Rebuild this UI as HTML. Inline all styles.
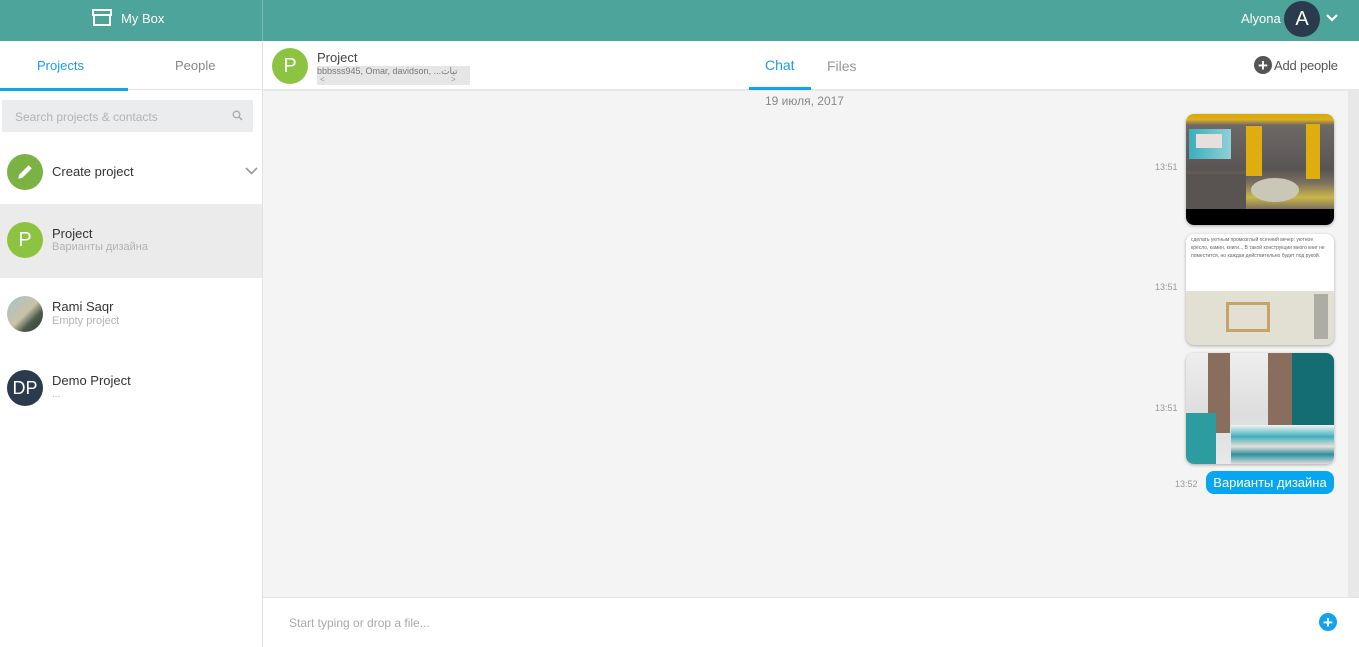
<!DOCTYPE html>
<html><head><meta charset="utf-8"><style>
*{box-sizing:border-box;margin:0;padding:0}
body{width:1359px;height:647px;overflow:hidden;font-family:"Liberation Sans","Noto Sans CJK SC",sans-serif;background:#fff;position:relative;font-size:13px}
.abs{position:absolute}
.top{left:0;top:0;width:1359px;height:41px;background:#4da49a}
.av{border-radius:50%;color:#fff;display:flex;align-items:center;justify-content:center}
.time{font-size:9px;color:#999}
.img{border-radius:8px;overflow:hidden;box-shadow:0 1px 3px rgba(0,0,0,.3)}
</style></head><body>
<div class="abs top"></div>
<div class="abs" style="left:262px;top:0;width:1px;height:41px;background:#7cbdb5"></div>
<svg class="abs" style="left:92px;top:9px" width="20" height="17" viewBox="0 0 20 17"><rect x="1" y="1" width="18" height="5" fill="none" stroke="#fff" stroke-width="2"/><rect x="2" y="6" width="16" height="10" fill="none" stroke="#fff" stroke-width="2"/></svg>
<div class="abs" style="left:121px;top:11px;color:#fff;font-size:13px">My Box</div>
<div class="abs" style="left:1241px;top:11px;color:#fff;font-size:13px">Alyona</div>
<div class="abs av" style="left:1284px;top:1px;width:36px;height:36px;background:#2b3a4c;font-size:20px">A</div>
<svg class="abs" style="left:1325px;top:13px" width="14" height="10"><path d="M2 2l5 5 5-5" fill="none" stroke="#fff" stroke-width="2.2"/></svg>

<div class="abs" style="left:0;top:41px;width:263px;height:606px;background:#fff;border-right:1px solid #e3e3e3"></div>
<div class="abs" style="left:37px;top:58px;color:#1a9de8;font-size:13px">Projects</div>
<div class="abs" style="left:175px;top:58px;color:#888;font-size:13px">People</div>
<div class="abs" style="left:0;top:88px;width:128px;height:3px;background:#13a3ec"></div>
<div class="abs" style="left:128px;top:89px;width:134px;height:1px;background:#e0e6e6"></div>
<div class="abs" style="left:2px;top:100px;width:251px;height:32px;background:#ebeced"></div>
<div class="abs" style="left:15px;top:110px;color:#b3b3b3;font-size:12px">Search projects &amp; contacts</div>
<svg class="abs" style="left:232px;top:110px" width="11" height="11"><circle cx="4.5" cy="4.5" r="3.3" fill="none" stroke="#aaa" stroke-width="1.3"/><path d="M7 7l3 3" stroke="#aaa" stroke-width="1.5"/></svg>
<div class="abs av" style="left:7px;top:154px;width:36px;height:36px;background:#7bb243"><svg width="18" height="18" viewBox="0 0 16 16"><path d="M2 14l.8-3.6 8.4-8.4 2.8 2.8-8.4 8.4z" fill="#fff"/></svg></div>
<div class="abs" style="left:52px;top:164px;color:#333;font-size:13px">Create project</div>
<svg class="abs" style="left:245px;top:167px" width="13" height="9"><path d="M1 1l5.5 5.5L12 1" fill="none" stroke="#999" stroke-width="1.6"/></svg>
<div class="abs" style="left:0;top:204px;width:262px;height:74px;background:#ebebeb"></div>
<div class="abs av" style="left:7px;top:222px;width:36px;height:36px;background:#8cc340;font-size:20px">P</div>
<div class="abs" style="left:52px;top:226px;color:#333;font-size:13px">Project</div>
<div class="abs" style="left:52px;top:241px;color:#b3b3b3;font-size:11px">Варианты дизайна</div>
<div class="abs av" style="left:7px;top:296px;width:36px;height:36px;background:linear-gradient(135deg,#a9c0c8 0%,#c9c3a8 50%,#4d5a4a 70%,#2f3e3a 100%)"></div>
<div class="abs" style="left:52px;top:299px;color:#333;font-size:13px">Rami Saqr</div>
<div class="abs" style="left:52px;top:315px;color:#b3b3b3;font-size:11px">Empty project</div>
<div class="abs av" style="left:7px;top:370px;width:36px;height:36px;background:#2b3a4c;font-size:18px">DP</div>
<div class="abs" style="left:52px;top:373px;color:#333;font-size:13px">Demo Project</div>
<div class="abs" style="left:52px;top:389px;color:#b3b3b3;font-size:10px">...</div>

<div class="abs" style="left:263px;top:89px;width:1096px;height:2px;background:#e3e8e8"></div>
<div class="abs av" style="left:272px;top:48px;width:36px;height:36px;background:#8cc340;font-size:20px">P</div>
<div class="abs" style="left:317px;top:50px;color:#444;font-size:13px">Project</div>
<div class="abs" style="left:317px;top:66px;width:153px;height:19px;background:#e6e6e6"></div>
<div class="abs" style="left:317px;top:66px;color:#777;font-size:9px">bbbsss945, Omar, davidson, ...تيات</div>
<div class="abs" style="left:320px;top:75px;color:#999;font-size:8px">&lt;</div>
<div class="abs" style="left:451px;top:75px;color:#999;font-size:8px">&gt;</div>
<div class="abs" style="left:765px;top:57px;color:#1a9de8;font-size:14px">Chat</div>
<div class="abs" style="left:749px;top:87px;width:62px;height:3px;background:#13a3ec"></div>
<div class="abs" style="left:827px;top:58px;color:#999;font-size:14px">Files</div>
<div class="abs av" style="left:1254px;top:56px;width:18px;height:18px;background:#555;font-size:17px;font-weight:bold;line-height:1">+</div>
<div class="abs" style="left:1274px;top:58px;color:#555;font-size:13px;letter-spacing:-0.2px">Add people</div>

<div class="abs" style="left:263px;top:91px;width:1085px;height:506px;background:#f4f4f4"></div>
<div class="abs" style="left:1348px;top:91px;width:11px;height:506px;background:#e8e8e8"></div>
<div class="abs" style="left:765px;top:94px;color:#888;font-size:12px">19 июля, 2017</div>
<div class="abs time" style="left:1155px;top:162px">13:51</div>
<div class="abs img" style="left:1186px;top:114px;width:148px;height:111px;background:linear-gradient(#000 0 0) bottom/100% 16px no-repeat,linear-gradient(180deg,#d6a800 0,#e0b020 5%,#6e6866 10%,#5a5555 50%,#7a7060 62%,#c9b64a 75%,#6b6260 88%)"><div style="position:absolute;left:3px;top:15px;width:42px;height:30px;background:linear-gradient(90deg,#3aaebc,#8fd0d6)"></div><div style="position:absolute;left:10px;top:20px;width:26px;height:14px;background:#e8dede"></div><div style="position:absolute;left:60px;top:12px;width:16px;height:50px;background:#e0ad10"></div><div style="position:absolute;left:120px;top:10px;width:14px;height:55px;background:#e0ad10"></div><div style="position:absolute;left:65px;top:64px;width:48px;height:24px;border-radius:50%;background:#c9c8b8"></div><div style="position:absolute;left:0;top:60px;width:60px;height:35px;background:#595452"></div></div>
<div class="abs time" style="left:1155px;top:282px">13:51</div>
<div class="abs img" style="left:1186px;top:234px;width:148px;height:111px;background:linear-gradient(#fff 0 0) top/100% 57px no-repeat,#e2e0d2"><div style="font-size:5px;color:#666;padding:2px 5px;line-height:8px">сделать уютным промозглый осенний вечер: уютное кресло, камин, книги... В такой конструкции много книг не поместится, но каждая действительно будет под рукой.</div><div style="position:absolute;left:40px;top:68px;width:44px;height:30px;border:3px solid #c6a36a"></div><div style="position:absolute;right:6px;top:60px;width:14px;height:45px;background:#777;opacity:.5"></div></div>
<div class="abs time" style="left:1155px;top:403px">13:51</div>
<div class="abs img" style="left:1186px;top:353px;width:148px;height:111px;background:linear-gradient(180deg,#eee 0,#ddd 55%,#e8e8e8 100%)"><div style="position:absolute;left:22px;top:0;width:22px;height:80px;background:#8a6e5d"></div><div style="position:absolute;left:82px;top:0;width:24px;height:80px;background:#8a6e5d"></div><div style="position:absolute;left:106px;top:0;width:42px;height:80px;background:#136d72"></div><div style="position:absolute;left:0;top:60px;width:30px;height:51px;background:#2d9ca0"></div><div style="position:absolute;left:45px;top:72px;width:103px;height:39px;background:linear-gradient(180deg,#f4f4f4 0,#3fb0bd 30%,#e8e0d8 55%,#2e8fa0 75%,#ddd 100%)"></div></div>
<div class="abs time" style="left:1175px;top:479px">13:52</div>
<div class="abs" style="left:1206px;top:471px;width:128px;height:23px;background:#08a6f0;border-radius:8px;color:#fff;font-size:13px;display:flex;align-items:center;justify-content:center">Варианты дизайна</div>

<div class="abs" style="left:263px;top:597px;width:1096px;height:1px;background:#e3e3e3"></div>
<div class="abs" style="left:289px;top:616px;color:#aaa;font-size:12px">Start typing or drop a file...</div>
<div class="abs av" style="left:1319px;top:613px;width:18px;height:18px;background:#13a3ec;font-size:17px;font-weight:bold;line-height:1">+</div>
</body></html>
